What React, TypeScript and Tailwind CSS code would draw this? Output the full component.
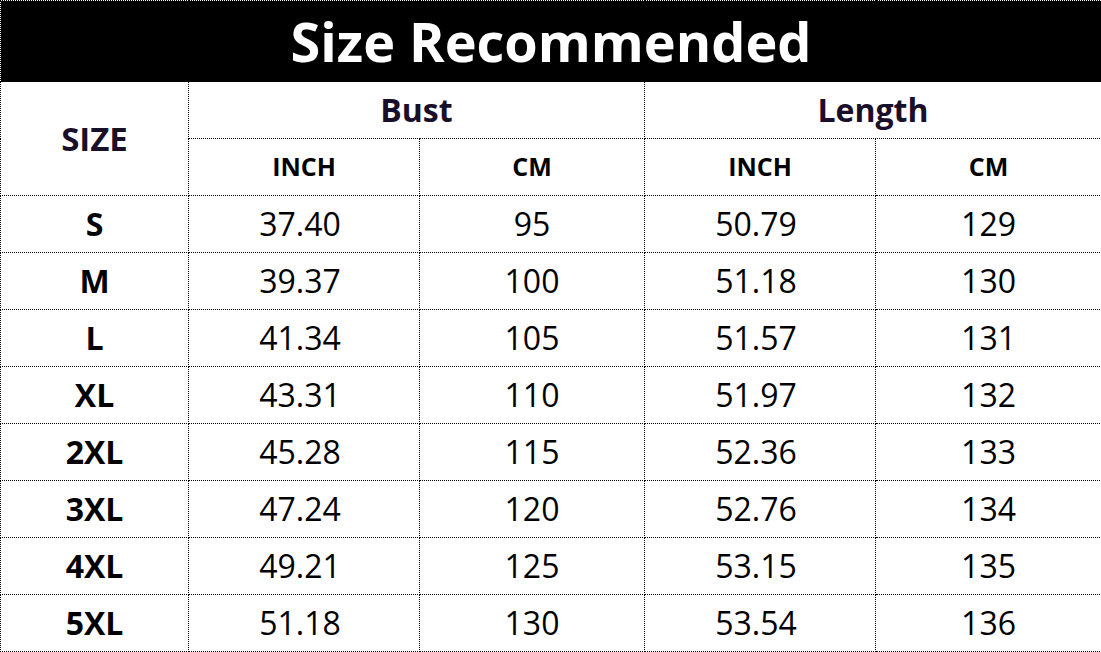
const rows = [
  ["S", "37.40", "95", "50.79", "129"],
  ["M", "39.37", "100", "51.18", "130"],
  ["L", "41.34", "105", "51.57", "131"],
  ["XL", "43.31", "110", "51.97", "132"],
  ["2XL", "45.28", "115", "52.36", "133"],
  ["3XL", "47.24", "120", "52.76", "134"],
  ["4XL", "49.21", "125", "53.15", "135"],
  ["5XL", "51.18", "130", "53.54", "136"],
];

const cell = "border border-dotted border-black text-center align-middle p-0";

export default function App() {
  return (
    <div
      className="w-[1101px] h-[652px] bg-white overflow-hidden"
      style={{ fontFamily: '"Open Sans", "Noto Sans", sans-serif' }}
    >
      <table className="w-[1101px] table-fixed border-collapse">
        <colgroup>
          <col className="w-[188px]" />
          <col className="w-[231px]" />
          <col className="w-[225px]" />
          <col className="w-[231px]" />
          <col className="w-[226px]" />
        </colgroup>
        <tbody>
          <tr className="h-[81px]">
            <td
              colSpan={5}
              className="border border-dotted border-black bg-black text-center text-white text-[54px] font-bold leading-none p-0"
            >
              Size Recommended
            </td>
          </tr>
          <tr className="h-[57px]">
            <td rowSpan={2} className={`${cell} text-[33px] font-bold text-[#1a0f2a]`}>
              SIZE
            </td>
            <td colSpan={2} className={`${cell} text-[32px] font-bold text-[#1a0f2a]`}>
              Bust
            </td>
            <td colSpan={2} className={`${cell} text-[32px] font-bold text-[#1a0f2a]`}>
              Length
            </td>
          </tr>
          <tr className="h-[57px]">
            {["INCH", "CM", "INCH", "CM"].map((t, i) => (
              <td key={i} className={`${cell} text-[25px] font-bold text-black`}>
                {t}
              </td>
            ))}
          </tr>
          {rows.map((r) => (
            <tr key={r[0]} className="h-[57px]">
              <td className={`${cell} text-[32px] font-bold text-black`}>{r[0]}</td>
              {r.slice(1).map((v, i) => (
                <td
                  key={i}
                  className={`${cell} text-[32px] text-black ${i % 2 === 0 ? "pr-2" : ""}`}
                >
                  {v}
                </td>
              ))}
            </tr>
          ))}
        </tbody>
      </table>
    </div>
  );
}
